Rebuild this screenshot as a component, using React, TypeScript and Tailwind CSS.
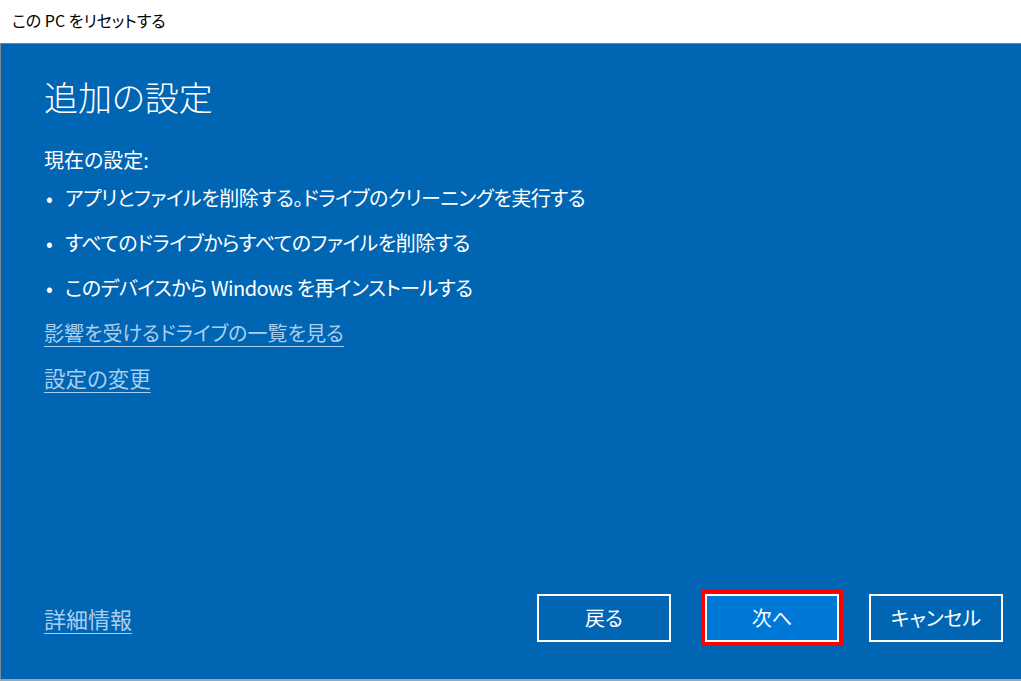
const font = "font-['Yu_Gothic_UI','Noto_Sans_CJK_JP',sans-serif] [font-feature-settings:'palt']";

const bullets = [
  "アプリとファイルを削除する。ドライブのクリーニングを実行する",
  "すべてのドライブからすべてのファイルを削除する",
  "このデバイスから Windows を再インストールする",
];

function Button({ label, primary }: { label: string; primary?: boolean }) {
  return (
    <button
      className={`flex h-[48px] w-[134px] items-center justify-center border-2 border-white text-[20px] text-white ${
        primary ? "bg-[#0078d7]" : "bg-transparent"
      }`}
    >
      {label}
    </button>
  );
}

export default function App() {
  return (
    <div className={`flex h-[681px] w-[1021px] flex-col bg-white ${font}`}>
      <div className="flex h-[43px] items-center pl-[12px] pb-[3px] text-[16px] text-black">
        この PC をリセットする
      </div>
      <div className="flex h-[636px] flex-col border-l border-t border-l-[#7a8a99] border-t-[#3f8fd0] bg-[#0065b3] pl-[43px] pr-[18px] pt-[31px] pb-[33px] text-white">
        <h1 className="text-[34px] font-light leading-[44px]">追加の設定</h1>
        <div className="mt-[22px] flex flex-col gap-[7px] text-[20px] leading-[38px]">
          <p className="mb-[-7px]">現在の設定:</p>
          {bullets.map((b) => (
            <div key={b} className="flex">
              <span className="w-[21px] pl-[2px]">•</span>
              <span className="tracking-[-0.5px]">{b}</span>
            </div>
          ))}
          <a className="text-[#a9cff0] underline decoration-1 underline-offset-[5px]" href="#">
            影響を受けるドライブの一覧を見る
          </a>
          <a className="text-[21.5px] text-[#a9cff0] underline decoration-1 underline-offset-[5px]" href="#">
            設定の変更
          </a>
        </div>
        <div className="mt-auto flex items-center">
          <a
            className="text-[22px] leading-[38px] text-[#a9cff0] underline decoration-1 underline-offset-[5px]"
            href="#"
          >
            詳細情報
          </a>
          <div className="ml-auto flex items-center">
            <Button label="戻る" />
            <div className="ml-[30px] border-4 border-[#ff0000]">
              <Button label="次へ" primary />
            </div>
            <div className="ml-[26px]">
              <Button label="キャンセル" />
            </div>
          </div>
        </div>
      </div>
      <div className="h-[2px] bg-[#9aa7b3]" />
    </div>
  );
}
